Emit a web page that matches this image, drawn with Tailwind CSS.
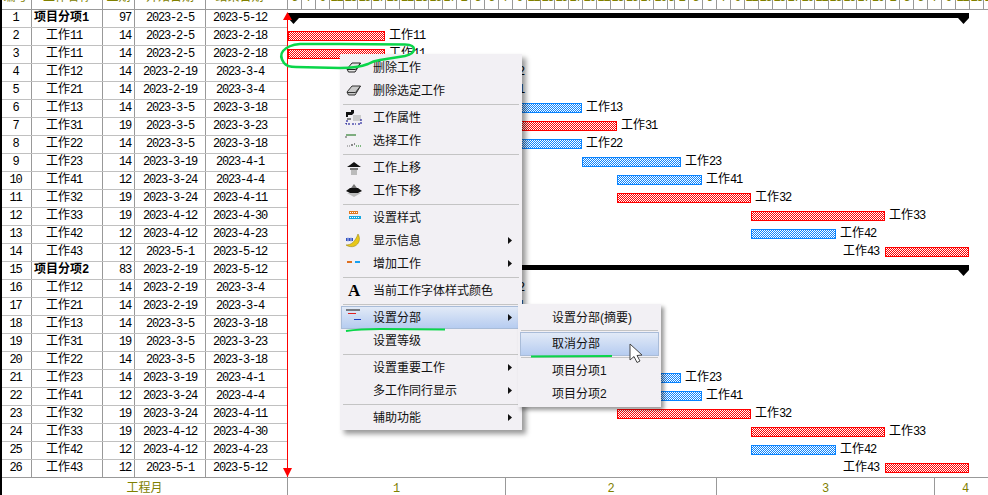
<!DOCTYPE html>
<html lang="zh-CN">
<head>
    <meta charset="UTF-8">
    <title>工程进度</title>
    <script src="https://cdn.jsdelivr.net/npm/@tailwindcss/browser@4"></script>
</head>
<body class="bg-white">
    <svg class="absolute" width="0" height="0">
        <defs>
            <pattern id="chk-r" width="2" height="2" patternUnits="userSpaceOnUse"><rect width="2" height="2" fill="#fff"/><rect width="1" height="1" fill="#f00"/><rect x="1" y="1" width="1" height="1" fill="#f00"/></pattern>
            <pattern id="chk-b" width="2" height="2" patternUnits="userSpaceOnUse"><rect width="2" height="2" fill="#fff"/><rect width="1" height="1" fill="#0a84ff"/><rect x="1" y="1" width="1" height="1" fill="#0a84ff"/></pattern>
        </defs>
    </svg>
    <div class="relative w-[988px] h-[495px] overflow-hidden bg-white flex text-[12px] text-black [font-family:'Liberation_Mono','Noto_Sans_CJK_SC',monospace]">
        <div class="w-[2px] bg-black shrink-0"></div>
        <div class="flex-1 flex flex-col min-w-0">
            <!-- header -->
            <div class="flex h-[10px] border-b border-[#999] text-[#808000] leading-[12px] tracking-normal shrink-0">
                <div class="w-[30px] border-r border-[#999] text-center overflow-hidden pr-[2px]"><div class="-mt-[8px]">编号</div></div>
                <div class="w-[71px] border-r border-[#999] text-center overflow-hidden"><div class="-mt-[8px]">工作名称</div></div>
                <div class="w-[32px] border-r border-[#999] text-center overflow-hidden"><div class="-mt-[8px]">工期</div></div>
                <div class="w-[71px] border-r border-[#999] text-center overflow-hidden"><div class="-mt-[8px]">开始日期</div></div>
                <div class="w-[82px] border-r border-[#999] text-center overflow-hidden pr-[14px]"><div class="-mt-[8px]">结束日期</div></div>
                <div id="ticks" class="flex-1 flex overflow-hidden tracking-[-1.2px]"></div>
            </div>
            <!-- rows -->
            <div id="rows" class="flex-1 flex flex-col min-h-0"></div>
            <!-- footer -->
            <div class="flex h-[18px] border-t border-[#999] text-[#808000] shrink-0 leading-[18px]">
                <div class="w-[286px] border-r border-[#999] text-center pt-[2px] tracking-normal">工程月</div>
                <div class="w-[218px] border-r border-[#999] text-center pt-[2px]">1</div>
                <div class="w-[211px] border-r border-[#999] text-center pt-[2px]">2</div>
                <div class="w-[218px] border-r border-[#999] text-center pt-[2px]">3</div>
                <div class="flex-1 text-center pt-[2px] pl-[8px]">4</div>
            </div>
        </div>

        <!-- red date line -->
        <div class="absolute left-[287px] top-[15px] w-[1px] h-[462px] bg-[#f00]"></div>
        <svg class="absolute left-[282px] top-[11px]" width="11" height="10"><path d="M5.5 1L10 9H1z" fill="#f00"/></svg>
        <svg class="absolute left-[282px] top-[468px]" width="11" height="10"><path d="M1 0H10L5.5 9z" fill="#f00"/></svg>

        <!-- main menu -->
        <div class="absolute left-[340px] top-[54px] w-[182px] h-[376px] bg-[#f2f0f4] pt-[2px] px-[1px] shadow-[4px_4px_5px_rgba(0,0,0,0.4)] [font-family:'Liberation_Sans','Noto_Sans_CJK_SC',sans-serif] text-[#111]">
            <div class="relative h-[23px] flex items-center pl-[32px]">
                <svg class="absolute left-[5px] top-[5px]" width="16" height="13" viewBox="0 0 16 13"><path d="M1 8L6 2H14.5L10 9.5L9 11H2.5z" fill="#e4e4e4" stroke="#222"/><path d="M1 8.5H9.5L14.5 2" fill="none" stroke="#222"/></svg>
                删除工作
            </div>
            <div class="relative h-[23px] flex items-center pl-[32px]">
                <svg class="absolute left-[5px] top-[5px]" width="16" height="13" viewBox="0 0 16 13"><path d="M1 8L6 2H14.5L10 9.5L9 11H2.5z" fill="#c8c8c8" stroke="#333"/><path d="M1 8.5H9.5L14.5 2" fill="none" stroke="#333"/></svg>
                删除选定工作
            </div>
            <div class="h-[4px] flex items-center px-[2px]"><div class="w-full h-[1px] bg-[#c4c4c4]"></div></div>
            <div class="relative h-[23px] flex items-center pl-[32px]">
                <svg class="absolute left-[4px] top-[4px]" width="18" height="15" viewBox="0 0 18 15"><path d="M1 2H6V0H9V3L7 5H3V7H1z" fill="#111"/><path d="M8 5H16V11H8z" fill="#ccc"/><path d="M1 11H3M1 13V14H5M7 14H11M13 14H16V9" fill="none" stroke="#00008b" stroke-dasharray="2 1"/><path d="M2 9H6" stroke="#111"/></svg>
                工作属性
            </div>
            <div class="relative h-[23px] flex items-center pl-[32px]">
                <svg class="absolute left-[4px] top-[4px]" width="18" height="15" viewBox="0 0 18 15"><path d="M1 2H11" stroke="#0a6a0a"/><path d="M1 3V5" stroke="#555"/><path d="M6 12H8M9 11H10" stroke="#222"/><path d="M11 13H17" stroke="#0a7a0a" stroke-dasharray="1 1"/><path d="M2 13H5" stroke="#777" stroke-dasharray="1 1"/></svg>
                选择工作
            </div>
            <div class="h-[4px] flex items-center px-[2px]"><div class="w-full h-[1px] bg-[#c4c4c4]"></div></div>
            <div class="relative h-[23px] flex items-center pl-[32px]">
                <svg class="absolute left-[4px] top-[5px]" width="18" height="15" viewBox="0 0 18 15"><path d="M5 4L9 1L13 4L16 6H2z" fill="#111"/><path d="M5 7H13V9H5z" fill="#777"/><path d="M6 9H12V14H6z" fill="#bbb"/></svg>
                工作上移
            </div>
            <div class="relative h-[23px] flex items-center pl-[32px]">
                <svg class="absolute left-[4px] top-[4px]" width="18" height="15" viewBox="0 0 18 15"><path d="M6 5L9 1L12 5z" fill="#777"/><path d="M5 5H13L17 8L13 10H5L1 8z" fill="#111"/><path d="M2 10H16L9 14z" fill="#bbb"/></svg>
                工作下移
            </div>
            <div class="h-[4px] flex items-center px-[2px]"><div class="w-full h-[1px] bg-[#c4c4c4]"></div></div>
            <div class="relative h-[23px] flex items-center pl-[32px]">
                <svg class="absolute left-[7px] top-[4px]" width="14" height="13" viewBox="0 0 14 13"><path d="M1 1H10V4H1z" fill="#e07a20"/><path d="M2 2.5H9" stroke="#fff" stroke-dasharray="1 1"/><path d="M1 6H13V9H1z" fill="#18a8e0"/><path d="M2 7.5H12" stroke="#fff" stroke-dasharray="1 1"/></svg>
                设置样式
            </div>
            <div class="relative h-[23px] flex items-center pl-[32px]">
                <svg class="absolute left-[4px] top-[4px]" width="17" height="15" viewBox="0 0 17 15"><path d="M13 1C16 6 14 11 10 13C7 14.5 3 13.5 1 12C6 12 10 9 13 1z" fill="#e8c81a" stroke="#8a7a10" stroke-width="0.5"/><path d="M1 5H8V8H1z" fill="#3050c0"/><path d="M3 4V9M6 4V9" stroke="#c0c8f0"/></svg>
                显示信息
                <svg class="absolute right-[8px] top-[8px]" width="5" height="7"><path d="M0 0L4 3.5L0 7z" fill="#111"/></svg>
            </div>
            <div class="relative h-[23px] flex items-center pl-[32px]">
                <svg class="absolute left-[6px] top-[6px]" width="14" height="10"><path d="M0 4H5" stroke="#e07020" stroke-width="2"/><path d="M8 4H13" stroke="#18a0f0" stroke-width="2"/></svg>
                增加工作
                <svg class="absolute right-[8px] top-[8px]" width="5" height="7"><path d="M0 0L4 3.5L0 7z" fill="#111"/></svg>
            </div>
            <div class="h-[4px] flex items-center px-[2px]"><div class="w-full h-[1px] bg-[#c4c4c4]"></div></div>
            <div class="relative h-[23px] flex items-center pl-[32px]">
                <span class="absolute left-[7px] top-[1px] text-[17px] leading-[21px] font-bold text-black [font-family:'Liberation_Serif',serif]">A</span>
                当前工作字体样式颜色
            </div>
            <div class="h-[4px] flex items-center px-[2px]"><div class="w-full h-[1px] bg-[#c4c4c4]"></div></div>
            <div class="relative h-[23px] flex items-center pl-[31px] border border-[#a9bcd8] bg-linear-to-b from-[#e2eaf7] to-[#b6ccf0]">
                <svg class="absolute left-[3px] top-[1px]" width="18" height="14"><path d="M1 2H15" stroke="#111"/><path d="M3 5.5H11" stroke="#e02020"/><path d="M9 11.5H16" stroke="#2040c0"/></svg>
                设置分部
                <svg class="absolute right-[7px] top-[7px]" width="5" height="7"><path d="M0 0L4 3.5L0 7z" fill="#111"/></svg>
            </div>
            <div class="h-[23px] flex items-center pl-[32px]">设置等级</div>
            <div class="h-[4px] flex items-center px-[2px]"><div class="w-full h-[1px] bg-[#c4c4c4]"></div></div>
            <div class="relative h-[23px] flex items-center pl-[32px]">
                设置重要工作
                <svg class="absolute right-[8px] top-[8px]" width="5" height="7"><path d="M0 0L4 3.5L0 7z" fill="#111"/></svg>
            </div>
            <div class="relative h-[23px] flex items-center pl-[32px]">
                多工作同行显示
                <svg class="absolute right-[8px] top-[8px]" width="5" height="7"><path d="M0 0L4 3.5L0 7z" fill="#111"/></svg>
            </div>
            <div class="h-[4px] flex items-center px-[2px]"><div class="w-full h-[1px] bg-[#c4c4c4]"></div></div>
            <div class="relative h-[23px] flex items-center pl-[32px]">
                辅助功能
                <svg class="absolute right-[8px] top-[8px]" width="5" height="7"><path d="M0 0L4 3.5L0 7z" fill="#111"/></svg>
            </div>
        </div>

        <!-- sub menu -->
        <div class="absolute left-[518px] top-[304px] w-[143px] h-[103px] bg-[#f2f0f4] pt-[2px] px-[2px] shadow-[3px_3px_4px_rgba(0,0,0,0.4)] [font-family:'Liberation_Sans','Noto_Sans_CJK_SC',sans-serif] text-[#111]">
            <div class="h-[23px] flex items-center pl-[32px]">设置分部(摘要)</div>
            <div class="h-[3px] flex items-center px-[1px]"><div class="w-full h-[1px] bg-[#c4c4c4]"></div></div>
            <div class="h-[24px] flex items-center pl-[31px] border border-[#a9bcd8] bg-linear-to-b from-[#e2eaf7] to-[#b6ccf0]">取消分部</div>
            <div class="h-[3px] flex items-center px-[1px]"><div class="w-full h-[1px] bg-[#c4c4c4]"></div></div>
            <div class="h-[23px] flex items-center pl-[32px]">项目分项1</div>
            <div class="h-[23px] flex items-center pl-[32px]">项目分项2</div>
        </div>

        <!-- hand drawn green marks and the mouse pointer -->
        <svg class="absolute left-0 top-0 pointer-events-none" width="988" height="495" fill="none">
            <path d="M340 44L300 44Q288 45 283 51Q279 56 284 63Q287 67 296 67L340 68Q358 68 368 64Q373 61 380 60L405 56Q414 54 414 49Q414 45 405 44.5L340 44" stroke="#0ad64a" stroke-width="2.5"/>
            <path d="M346 331Q360 329 380 329L445 329.5" stroke="#0ad64a" stroke-width="2"/>
            <path d="M531 356.5L612 356" stroke="#0ad64a" stroke-width="2"/>
            <path d="M630 344V360L634 356.5L637 362.5L640 361L637 355.5L642 355z" fill="#fff" stroke="#444" stroke-width="1"/>
        </svg>
    </div>

    <script>
        // last two numbers: bar left and width in pixels, from the start of the chart
        const data = [
            ['项目分项1', 97, '2023-2-5', '2023-5-12', 0, 681, 's'],
            ['工作11', 14, '2023-2-5', '2023-2-18', 0, 97, 'r'],
            ['工作11', 14, '2023-2-5', '2023-2-18', 0, 97, 'r'],
            ['工作12', 14, '2023-2-19', '2023-3-4', 98, 98, 'b'],
            ['工作21', 14, '2023-2-19', '2023-3-4', 98, 98, 'b'],
            ['工作13', 14, '2023-3-5', '2023-3-18', 196, 98, 'b'],
            ['工作31', 19, '2023-3-5', '2023-3-23', 196, 133, 'r'],
            ['工作22', 14, '2023-3-5', '2023-3-18', 196, 98, 'b'],
            ['工作23', 14, '2023-3-19', '2023-4-1', 294, 99, 'b'],
            ['工作41', 12, '2023-3-24', '2023-4-4', 329, 85, 'b'],
            ['工作32', 19, '2023-3-24', '2023-4-11', 329, 134, 'r'],
            ['工作33', 19, '2023-4-12', '2023-4-30', 463, 134, 'r'],
            ['工作42', 12, '2023-4-12', '2023-4-23', 463, 85, 'b'],
            ['工作43', 12, '2023-5-1', '2023-5-12', 597, 84, 'r'],
            ['项目分项2', 83, '2023-2-19', '2023-5-12', 98, 583, 's'],
            ['工作12', 14, '2023-2-19', '2023-3-4', 98, 98, 'b'],
            ['工作21', 14, '2023-2-19', '2023-3-4', 98, 98, 'b'],
            ['工作13', 14, '2023-3-5', '2023-3-18', 196, 98, 'b'],
            ['工作31', 19, '2023-3-5', '2023-3-23', 196, 133, 'r'],
            ['工作22', 14, '2023-3-5', '2023-3-18', 196, 98, 'b'],
            ['工作23', 14, '2023-3-19', '2023-4-1', 294, 99, 'b'],
            ['工作41', 12, '2023-3-24', '2023-4-4', 329, 85, 'b'],
            ['工作32', 19, '2023-3-24', '2023-4-11', 329, 134, 'r'],
            ['工作33', 19, '2023-4-12', '2023-4-30', 463, 134, 'r'],
            ['工作42', 12, '2023-4-12', '2023-4-23', 463, 85, 'b'],
            ['工作43', 12, '2023-5-1', '2023-5-12', 597, 84, 'r'],
        ]

        const cn = s => s.replace(/^(\D+)/, '<span class="tracking-normal">$1</span>')

        function bar(r) {
            const name = r[0], px = r[4], width = r[5], kind = r[6]
            const left = px + 1
            if (kind === 's') {
                return `<div class="relative h-[5px] mt-[3px] bg-black" style="margin-left:${left}px;width:${width}px">
                    <svg class="absolute left-0 top-[5px]" width="11" height="6"><path d="M0 0H11L5.5 6z" fill="#000"/></svg>
                    <svg class="absolute right-0 top-[5px]" width="11" height="6"><path d="M0 0H11L5.5 6z" fill="#000"/></svg>
                </div>`
            }
            const border = kind === 'r' ? 'border-[#f00]' : 'border-[#0a84ff]'
            // keep the checker in step with the page, whatever pixel the bar starts on
            const shift = px % 2
            const b = `<div class="h-[10px] mt-[3px] border shrink-0 overflow-hidden ${border}" style="width:${width}px">
                <svg class="block" width="${width - 2}" height="8" viewBox="${shift} 0 ${width - 2} 8" shape-rendering="crispEdges"><rect width="${width + 2}" height="8" fill="url(#chk-${kind})"/></svg>
            </div>`
            const label = `<div class="w-[36px] shrink-0 leading-[17px] whitespace-nowrap tracking-[-1.2px]">${cn(name)}</div>`
            // the last bar runs to the end of the chart, its label goes in front
            if (px === 597) {
                return `<div class="flex gap-[6px]" style="margin-left:${left - 42}px">${label}${b}</div>`
            }
            return `<div class="flex gap-[4px]" style="margin-left:${left}px">${b}${label}</div>`
        }

        document.getElementById('rows').innerHTML = data.map((r, i) => {
            const sum = r[6] === 's'
            return `<div class="flex h-[18px] shrink-0">
                <div class="flex w-[285px] shrink-0 h-[18px] border-b border-[#c0c0c0] leading-[17px] tracking-[-1.2px]">
                    <div class="w-[30px] border-r border-[#999] text-center pr-[2px]">${i + 1}</div>
                    <div class="w-[71px] border-r border-[#999] whitespace-nowrap ${sum ? 'pl-[2px] font-bold' : 'pl-[14px]'}">${cn(r[0])}</div>
                    <div class="w-[32px] border-r border-[#999] text-right pr-[3px]">${r[1]}</div>
                    <div class="w-[71px] border-r border-[#999] text-center">${r[2]}</div>
                    <div class="w-[81px] text-center pr-[13px]">${r[3]}</div>
                </div>
                <div class="flex-1 min-w-0 whitespace-nowrap">${bar(r)}</div>
            </div>`
        }).join('')

        // date ticks: every second day, restarting from the 1st of a new month
        const PX = 7.03
        const ticks = []
        for (let d = 5; d <= 27; d += 2) ticks.push([d, (d - 5)])
        for (let d = 1; d <= 31; d += 2) ticks.push([d, 23 + d])
        for (let d = 1; d <= 29; d += 2) ticks.push([d, 54 + d])
        for (let d = 1; d <= 15; d += 2) ticks.push([d, 84 + d])
        document.getElementById('ticks').innerHTML = ticks.map((t, i) => {
            const next = ticks[i + 1] ? ticks[i + 1][1] : t[1] + 2
            const w = Math.round(next * PX) - Math.round(t[1] * PX)
            return `<div class="shrink-0 border-r border-[#999] text-center overflow-hidden" style="width:${w}px"><div class="-mt-[8px]">${t[0]}</div></div>`
        }).join('')
    </script>
</body>
</html>
